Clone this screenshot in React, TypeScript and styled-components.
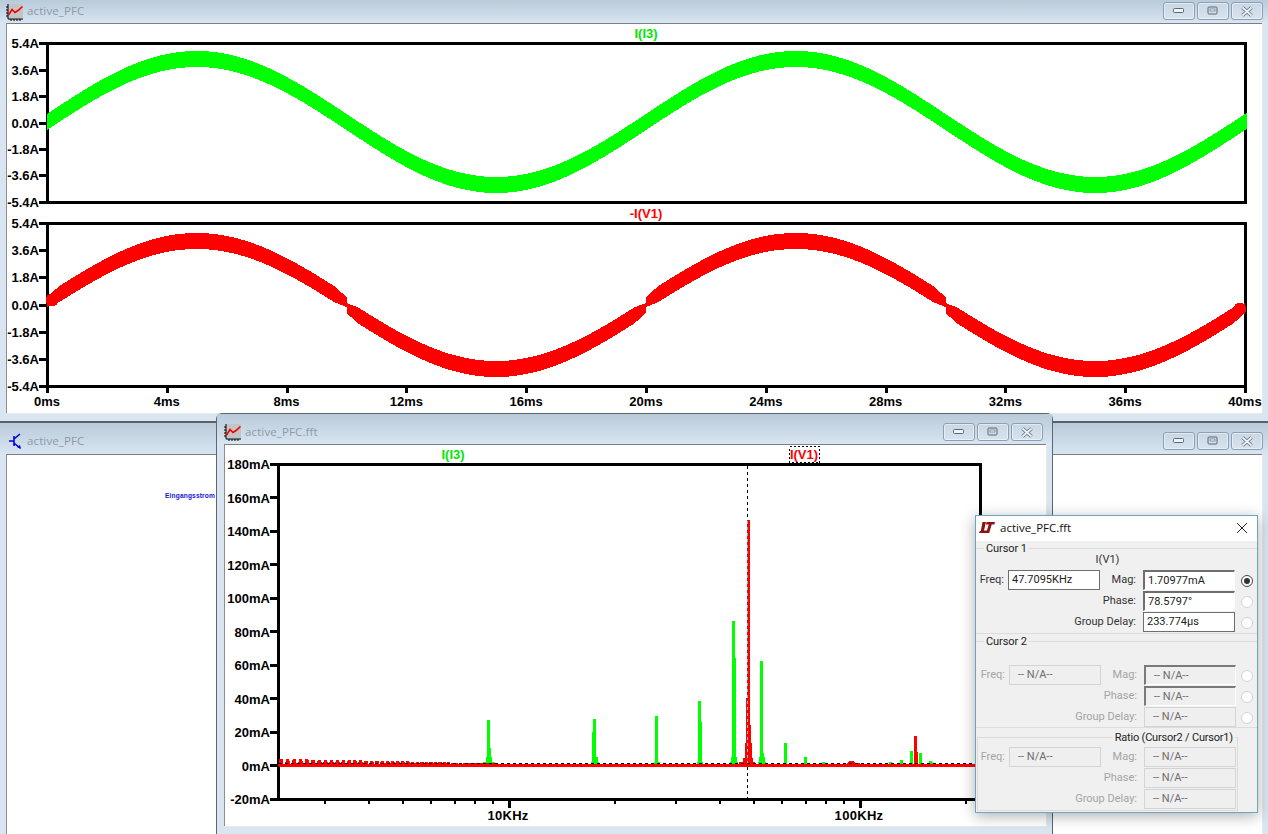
import React from "react";
import styled, { createGlobalStyle } from "styled-components";

const GlobalStyle = createGlobalStyle`
  html, body { margin: 0; padding: 0; background: #d9e6f2; }
  body { width: 1268px; height: 834px; overflow: hidden; font-family: "Open Sans", "Liberation Sans", sans-serif; }
`;

const Desktop = styled.div`
  position: relative; width: 1268px; height: 834px; overflow: hidden; background: #d9e6f2;
`;

const Win = styled.section<{ $x: number; $y: number; $w: number; $h: number; $round?: boolean }>`
  position: absolute; left: ${p => p.$x}px; top: ${p => p.$y}px; width: ${p => p.$w}px; height: ${p => p.$h}px;
  box-sizing: border-box; display: flex; flex-direction: column;
  background: #d9e6f2;
  ${p => p.$round
    ? "border: 1px solid #5f666e; border-bottom: 0; border-radius: 6px 6px 0 0; padding: 0 6px 8px 7px;"
    : "padding: 0 6px 8px;"}
`;

const TitleBar = styled.header<{ $h: number; $left: number; $right: number; $padR: number; $edge?: boolean }>`
  flex: none; height: ${p => p.$h}px; box-sizing: border-box;
  margin: 0 -${p => p.$right}px 0 -${p => p.$left}px; padding: 0 ${p => p.$padR}px 0 ${p => p.$left}px;
  display: flex; align-items: flex-start; gap: 3px;
  background: linear-gradient(#b9cad9, #d8e5f2);
  ${p => p.$edge && "border-top: 2px solid #5b6067;"}
`;

const TitleIcon = styled.svg<{ $top: number }>`
  flex: none; width: 18px; height: 18px; margin-top: ${p => p.$top}px;
`;

const TitleText = styled.span<{ $top: number }>`
  font-size: 11.5px; line-height: 16px; letter-spacing: .12px; color: #8e99a4; margin-top: ${p => p.$top}px;
`;

const Spacer = styled.div`
  flex: 1;
`;

const CtlGroup = styled.div<{ $top: number }>`
  display: flex; gap: 2px; margin-top: ${p => p.$top}px;
`;

const CtlButton = styled.div`
  width: 32px; height: 18px; box-sizing: border-box; display: flex; align-items: center; justify-content: center;
  border: 1px solid #8c9fb3; border-radius: 3px;
  background: linear-gradient(#c9d7e5, #d7e3ef);
  box-shadow: inset 0 0 0 1px rgba(255,255,255,.45);
`;

const Client = styled.div`
  flex: 1; min-height: 0; position: relative; overflow: hidden; background: #fff;
  border-top: 1px solid #7c7f83; border-left: 1px solid #8b8e92;
  box-shadow: 0 1px 0 #e9e9e9, 1px 0 0 #e9e9e9;
`;

const Drawing = styled.svg`
  display: block; position: absolute; left: 0; top: 0; shape-rendering: crispEdges;
`;

const NetLabel = styled.span`
  position: absolute; left: 158px; top: 37px;
  font: bold 6.6px "Liberation Sans", sans-serif; color: #1414d8; letter-spacing: .15px; white-space: nowrap;
`;

const Dialog = styled.aside`
  position: absolute; left: 975px; top: 515px; width: 283px; height: 298px; box-sizing: border-box;
  border: 1px solid #6aa6bf; background: #f0f0f0; display: flex; flex-direction: column;
  box-shadow: 0 3px 14px rgba(0,0,0,.32);
  font: 11px Roboto, "Liberation Sans", sans-serif; color: #1a1a1a;
`;

const DialogTitle = styled.header`
  flex: none; height: 25px; box-sizing: border-box; padding: 0 8px 2px 3px; background: #fff; display: flex; align-items: center; gap: 5px;
  font: 11.5px "Open Sans", sans-serif; color: #111;
`;

const CloseGlyph = styled.svg`
  width: 12px; height: 12px; margin-right: 1px;
`;

const Group = styled.div<{ $h: number; $rule?: boolean }>`
  flex: none; height: ${p => p.$h}px; box-sizing: border-box; position: relative; display: flex; flex-direction: column;
  ${p => p.$rule && "border-bottom: 1px solid #dcdcdc;"}
`;

const GroupHead = styled.div`
  flex: none; height: 14px; margin-top: 1px; display: flex; align-items: center; padding-left: 8px; color: #222;
  &::before { content: ""; position: absolute; left: 0; right: 0; top: 7px; height: 1px; background: #dcdcdc; }
`;

const GroupName = styled.span<{ $tight?: boolean }>`
  position: relative; background: #f0f0f0; padding: 0 2px; line-height: 14px;
  letter-spacing: ${p => (p.$tight ? "-.2px" : "-.1px")};
`;

const Trace = styled.div`
  height: 14px; margin-top: -3px; margin-bottom: 3px; text-align: center; line-height: 14px; color: #333; padding-right: 18px;
`;

const Gap = styled.div<{ $h: number }>`
  flex: none; height: ${p => p.$h}px;
`;

const RatioBox = styled.div`
  position: absolute; left: 1px; top: 9px; width: 261px; bottom: 1px; box-sizing: border-box; border: 1px solid #dcdcdc;
`;

const RatioHead = styled.div`
  flex: none; height: 14px; margin-top: 3px; position: relative; display: flex; justify-content: flex-end; padding-right: 22px; color: #222;
`;

const Row = styled.div<{ $shift?: boolean }>`
  flex: none; height: 21px; position: relative;
  display: grid; grid-template-columns: ${p => (p.$shift ? "33px 92px 43px 92px 21px" : "32px 92px 43px 92px 23px")}; align-items: start;
`;

const Lbl = styled.label<{ $off?: boolean; $wide?: boolean; $at?: number }>`
  grid-column: ${p => (p.$wide ? "1 / 4" : p.$at ?? 1)};
  text-align: right; padding-right: ${p => (p.$at === 3 || p.$wide ? 7 : 4)}px; line-height: 20px;
  white-space: nowrap; color: ${p => (p.$off ? "#a4a4a4" : "#333")};
`;

const Field = styled.div<{ $kind: "plain" | "sunken" | "off" | "offSunken"; $at: number }>`
  grid-column: ${p => p.$at}; height: 20px; box-sizing: border-box; line-height: 18px; padding-left: ${p => (p.$kind === "plain" || p.$kind === "sunken" ? 3 : 8)}px;
  color: ${p => (p.$kind === "plain" || p.$kind === "sunken" ? "#222" : "#6d6d6d")};
  background: ${p => (p.$kind === "plain" || p.$kind === "sunken" ? "#fff" : "#efefef")};
  ${p => p.$kind === "plain" && "border: 1px solid #6e6e6e;"}
  ${p => p.$kind === "sunken" && "border: 1px solid #fff; border-top: 2px solid #6e6e6e; border-left: 2px solid #6e6e6e;"}
  ${p => p.$kind === "off" && "border: 1px solid #d4d4d4;"}
  ${p => p.$kind === "offSunken" && "border: 1px solid #fff; border-top: 2px solid #7a7a7a; border-left: 2px solid #7a7a7a;"}
`;

const Radio = styled.span<{ $on?: boolean }>`
  grid-column: 5; justify-self: center; align-self: center; width: 12px; height: 12px; border-radius: 50%; box-sizing: border-box;
  border: 1px solid ${p => (p.$on ? "#444" : "#d2d2d2")}; background: #fff; position: relative;
  ${p => p.$on && "&::after { content: ''; position: absolute; inset: 2px; border-radius: 50%; background: #333; }"}
`;

const Axis = "#000";
const plotFont = { fontFamily: '"Liberation Sans", sans-serif', fontWeight: 700, fontSize: 13, shapeRendering: "auto" } as const;

// band with a fixed vertical thickness, the ripple of the current makes it that wide
function band(x0: number, x1: number, yAt: (x: number) => number, half: (x: number) => number) {
  const top: string[] = [];
  const bot: string[] = [];
  for (let x = x0; x <= x1; x += 1) {
    top.push(`${x},${(yAt(x) - half(x)).toFixed(1)}`);
    bot.unshift(`${x},${(yAt(x) + half(x)).toFixed(1)}`);
  }
  return [...top, ...bot].join(" ");
}

const PX_MS = 29.95;
const T0 = 47;

const yTicksTop = [["5.4A", 43], ["3.6A", 70], ["1.8A", 96], ["0.0A", 123], ["-1.8A", 149], ["-3.6A", 175], ["-5.4A", 202]] as const;
const yTicksBot = [["5.4A", 223], ["3.6A", 250], ["1.8A", 277], ["0.0A", 305], ["-1.8A", 332], ["-3.6A", 359], ["-5.4A", 386]] as const;
const msTicks = Array.from({ length: 11 }, (_, i) => i * 4);

function TimePlots() {
  const green = band(T0, 1247, x => 122 - 63 * Math.sin(((x - T0) / (PX_MS * 20)) * 2 * Math.PI), () => 8);
  const halves = [0, 1, 2, 3].map(i => {
    const a = T0 + i * 10 * PX_MS;
    const b = T0 + (i + 1) * 10 * PX_MS;
    const up = i % 2 === 0;
    const base = up ? 302 : 308;
    return band(Math.round(a), Math.round(b), x => {
      const s = Math.abs(Math.sin(((x - T0) / (PX_MS * 10)) * Math.PI));
      return up ? base - 61 * s : base + 61 * s;
    }, x => {
      const s = Math.abs(Math.sin(((x - T0) / (PX_MS * 10)) * Math.PI));
      return 5 + 3 * Math.min(1, s * 8);
    });
  });
  return (
    <Drawing width={1255} height={388} viewBox="7 24 1255 388">
      <rect x={47.5} y={43.5} width={1198} height={159} fill="none" stroke={Axis} strokeWidth={3} />
      <polygon points={green} fill="#00ff00" />
      {yTicksTop.map(([t, y]) => (
        <g key={t}>
          <line x1={39} x2={47} y1={y + 0.5} y2={y + 0.5} stroke={Axis} strokeWidth={3} />
          <text x={39} y={y + 5} textAnchor="end" {...plotFont}>{t}</text>
        </g>
      ))}
      <text x={646} y={38} textAnchor="middle" {...plotFont} fill="#00e600">I(I3)</text>

      <rect x={47.5} y={223.5} width={1198} height={163} fill="none" stroke={Axis} strokeWidth={3} />
      {halves.map((p, i) => <polygon key={i} points={p} fill="#ff0000" />)}
      <circle cx={52} cy={300} r={6.5} fill="#ff0000" />
      <circle cx={1240} cy={309} r={6.5} fill="#ff0000" />
      {yTicksBot.map(([t, y]) => (
        <g key={t}>
          <line x1={39} x2={47} y1={y + 0.5} y2={y + 0.5} stroke={Axis} strokeWidth={3} />
          <text x={39} y={y + 5} textAnchor="end" {...plotFont}>{t}</text>
        </g>
      ))}
      <text x={646} y={218} textAnchor="middle" {...plotFont} fill="#ff0000">-I(V1)</text>

      {msTicks.map(m => {
        const x = T0 + m * PX_MS;
        return (
          <g key={m}>
            <line x1={x + 0.5} x2={x + 0.5} y1={386} y2={393} stroke={Axis} strokeWidth={3} />
            <text x={x} y={406} textAnchor="middle" {...plotFont}>{m}ms</text>
          </g>
        );
      })}
    </Drawing>
  );
}

const DEC = 351;
const X10K = 509;
const fx = (khz: number) => X10K + DEC * Math.log10(khz / 10);
const minorK = [3, 4, 5, 6, 7, 8, 9, 20, 30, 40, 50, 60, 70, 80, 90, 200];
const mA = Array.from({ length: 11 }, (_, i) => 180 - i * 20);
const yOf = (v: number) => 765.5 - v * 1.675;

// [x, top, half-width of the foot, y where a second sample widens the spike (0: none), side of it]
const greenSpikes: [number, number, number, number, number][] = [
  [487, 720, 6, 748, 1], [593, 719, 4, 732, -1], [655, 716, 3, 0, 0], [698, 701, 3, 722, 1], [732, 621, 4, 658, 1], [760, 661, 4, 753, 1],
  [784, 743, 1, 0, 0], [804, 757, 1, 0, 0], [822, 762, 1, 0, 0], [889, 762, 1, 0, 0], [900, 760, 1, 0, 0], [910, 751, 1, 0, 0], [919, 753, 1, 0, 0], [929, 761, 2, 0, 0],
];

function Spike({ x, top, foot, wide, side, color }: { x: number; top: number; foot: number; wide: number; side: number; color: string }) {
  return (
    <g fill={color}>
      <rect x={x} y={top} width={3} height={766 - top} />
      {wide > 0 && <rect x={side > 0 ? x + 3 : x - 1} y={wide} width={1} height={766 - wide} />}
      <rect x={x + 1.5 - foot} y={762} width={foot * 2} height={3} />
      {foot > 3 && <rect x={x - 1} y={757} width={6} height={6} />}
    </g>
  );
}

// the stepped outline of the fundamental, samples get wider to the foot
const mainPeak: [number, number, number][] = [
  [747, 750, 520], [746, 750, 698], [746, 751, 725], [745, 752, 743], [743, 753, 758], [739, 755, 762],
];

function FftPlot() {
  const comb: React.ReactElement[] = [];
  for (let i = 0, x = 281; x < 500; i += 1) {
    const h = Math.max(3, 7 - i * 0.11);
    comb.push(<polygon key={x} points={`${x - 3},766 ${x - 1.5},${766 - h} ${x + 1.5},${766 - h} ${x + 3},766`} fill="#ff0000" />);
    x += Math.max(3.5, 6.6 - i * 0.08);
  }
  return (
    <Drawing width={821} height={381} viewBox="225 445 821 381">
      <text x={453} y={459} textAnchor="middle" {...plotFont} fill="#00e600">I(I3)</text>
      <text x={804} y={459} textAnchor="middle" {...plotFont} fill="#ff0000">I(V1)</text>
      <rect x={789.5} y={446.5} width={30} height={16} fill="none" stroke="#000" strokeDasharray="2 2" />
      <rect x={278} y={464.5} width={702.5} height={335} fill="none" stroke={Axis} strokeWidth={3} />
      {mA.map(v => (
        <g key={v}>
          <line x1={270} x2={278} y1={yOf(v)} y2={yOf(v)} stroke={Axis} strokeWidth={3} />
          <text x={270} y={yOf(v) + 5} textAnchor="end" {...plotFont}>{v}mA</text>
        </g>
      ))}
      {minorK.map(k => <line key={k} x1={fx(k)} x2={fx(k)} y1={799} y2={804} stroke={Axis} strokeWidth={2} />)}
      {[10, 100].map(k => (
        <g key={k}>
          <line x1={fx(k)} x2={fx(k)} y1={799} y2={808} stroke={Axis} strokeWidth={3} />
          <text x={fx(k) - 1} y={820} textAnchor="middle" {...plotFont} letterSpacing={0.3}>{k}KHz</text>
        </g>
      ))}
      {greenSpikes.map(([x, top, foot, wide, side]) => <Spike key={x} x={x} top={top} foot={foot} wide={wide} side={side} color="#00ff00" />)}
      {comb}
      {mainPeak.map(([a, b, top]) => <rect key={top} x={a} y={top} width={b - a} height={766 - top} fill="#ff0000" />)}
      <Spike x={914} top={736} foot={2} wide={752} side={1} color="#ff0000" />
      <polygon points="845,765 850,761 853,761 855,763 860,763 861,765" fill="#ff0000" />
      <line x1={279} x2={980} y1={765.5} y2={765.5} stroke="#ff0000" strokeWidth={3} />
      <line x1={279} x2={980} y1={763.5} y2={763.5} stroke="#000" strokeDasharray="3 3" />
      <line x1={747.5} x2={747.5} y1={466} y2={520} stroke="#000" strokeDasharray="3 3" />
      <line x1={747.5} x2={747.5} y1={767} y2={798} stroke="#000" strokeDasharray="3 3" />
      <line x1={747.5} x2={747.5} y1={521} y2={763} stroke="#39d9d9" strokeDasharray="3 3" />
    </Drawing>
  );
}

function Controls({ top }: { top: number }) {
  return (
    <CtlGroup $top={top}>
      <CtlButton>
        <svg width="12" height="6" viewBox="0 0 12 6"><rect x=".5" y=".5" width="10" height="4" rx="1" fill="#eef3f8" stroke="#5c6670" /></svg>
      </CtlButton>
      <CtlButton>
        <svg width="12" height="10" viewBox="0 0 12 10"><rect x="1" y="1" width="9" height="7" rx="1" fill="none" stroke="#5c6670" strokeWidth="1" /><rect x="3" y="3" width="5" height="2" fill="#eef3f8" stroke="#5c6670" strokeWidth=".6" /></svg>
      </CtlButton>
      <CtlButton>
        <svg width="14" height="11" viewBox="0 0 14 11"><path d="M2.5 1.5 11.5 9.5M11.5 1.5 2.5 9.5" stroke="#66717c" strokeWidth="3.6" /><path d="M2.5 1.5 11.5 9.5M11.5 1.5 2.5 9.5" stroke="#edf2f7" strokeWidth="1.8" /></svg>
      </CtlButton>
    </CtlGroup>
  );
}

function WaveIcon({ top }: { top: number }) {
  return (
    <TitleIcon $top={top} viewBox="0 0 18 18">
      <rect x="2" y="1" width="15" height="14" fill="#c4c4c4" />
      <path d="M2 1v15h15" fill="none" stroke="#000" />
      <path d="M0 4h2M0 7h2M0 10h2M0 13h2M5 16v2M8 16v2M11 16v2M14 16v2" stroke="#000" />
      <path d="M2.5 12 6 6.5l3 3 3-2 4.5-4" fill="none" stroke="#f00000" strokeWidth="1.6" />
    </TitleIcon>
  );
}

function SchematicIcon({ top }: { top: number }) {
  return (
    <TitleIcon $top={top} viewBox="0 0 18 18">
      <path d="M3 9h5M8 4v10M8 7l6-5M8 11l6 5" fill="none" stroke="#0000e0" strokeWidth="1.6" />
      <path d="M11 15l4 2-1-4z" fill="#0000e0" />
    </TitleIcon>
  );
}

function LtLogo() {
  return (
    <svg width="16" height="11" viewBox="0 0 16 11">
      <path d="M3.5 0H7L5 8.5H8L7.3 11H0l.8-2h1zM7.5 0H16l-.7 2.4h-2.6L10.2 11H7.2l2.5-8.6H7z" fill="#8f1212" />
    </svg>
  );
}

const NA = "-- N/A--";

function CursorDialog() {
  return (
    <Dialog>
      <DialogTitle>
        <LtLogo />
        active_PFC.fft
        <Spacer />
        <CloseGlyph viewBox="0 0 12 12"><path d="M1 1l10 10M11 1 1 11" stroke="#222" strokeWidth="1" /></CloseGlyph>
      </DialogTitle>
      <Group $h={93} $rule>
        <GroupHead><GroupName>Cursor 1</GroupName></GroupHead>
        <Trace>I(V1)</Trace>
        <Row>
          <Lbl>Freq:</Lbl>
          <Field $at={2} $kind="plain">47.7095KHz</Field>
          <Lbl $at={3}>Mag:</Lbl>
          <Field $at={4} $kind="sunken">1.70977mA</Field>
          <Radio $on />
        </Row>
        <Row>
          <Lbl $wide>Phase:</Lbl>
          <Field $at={4} $kind="sunken">78.5797°</Field>
          <Radio />
        </Row>
        <Row>
          <Lbl $wide>Group Delay:</Lbl>
          <Field $at={4} $kind="plain">233.774µs</Field>
          <Radio />
        </Row>
      </Group>
      <Group $h={94} $rule>
        <GroupHead><GroupName>Cursor 2</GroupName></GroupHead>
        <Gap $h={16} />
        <Row $shift>
          <Lbl $off>Freq:</Lbl>
          <Field $at={2} $kind="off">{NA}</Field>
          <Lbl $off $at={3}>Mag:</Lbl>
          <Field $at={4} $kind="offSunken">{NA}</Field>
          <Radio />
        </Row>
        <Row $shift>
          <Lbl $off $wide>Phase:</Lbl>
          <Field $at={4} $kind="offSunken">{NA}</Field>
          <Radio />
        </Row>
        <Row $shift>
          <Lbl $off $wide>Group Delay:</Lbl>
          <Field $at={4} $kind="off">{NA}</Field>
          <Radio />
        </Row>
      </Group>
      <Group $h={84}>
        <RatioBox />
        <RatioHead><GroupName $tight>Ratio (Cursor2 / Cursor1)</GroupName></RatioHead>
        <Gap $h={2} />
        <Row $shift>
          <Lbl $off>Freq:</Lbl>
          <Field $at={2} $kind="off">{NA}</Field>
          <Lbl $off $at={3}>Mag:</Lbl>
          <Field $at={4} $kind="off">{NA}</Field>
        </Row>
        <Row $shift>
          <Lbl $off $wide>Phase:</Lbl>
          <Field $at={4} $kind="off">{NA}</Field>
        </Row>
        <Row $shift>
          <Lbl $off $wide>Group Delay:</Lbl>
          <Field $at={4} $kind="off">{NA}</Field>
        </Row>
      </Group>
    </Dialog>
  );
}

export default function App() {
  return (
    <Desktop>
      <GlobalStyle />
      <Win $x={0} $y={0} $w={1268} $h={421}>
        <TitleBar $h={23} $left={6} $right={6} $padR={5}>
          <WaveIcon top={3} />
          <TitleText $top={3}>active_PFC</TitleText>
          <Spacer />
          <Controls top={2} />
        </TitleBar>
        <Client><TimePlots /></Client>
      </Win>
      <Win $x={0} $y={421} $w={1268} $h={440}>
        <TitleBar $h={33} $left={6} $right={6} $padR={5} $edge>
          <SchematicIcon top={9} />
          <TitleText $top={10}>active_PFC</TitleText>
          <Spacer />
          <Controls top={9} />
        </TitleBar>
        <Client><NetLabel>Eingangsstrom</NetLabel></Client>
      </Win>
      <Win $x={216} $y={413} $w={837} $h={421} $round>
        <TitleBar $h={30} $left={7} $right={6} $padR={9}>
          <WaveIcon top={9} />
          <TitleText $top={10}>active_PFC.fft</TitleText>
          <Spacer />
          <Controls top={9} />
        </TitleBar>
        <Client><FftPlot /></Client>
      </Win>
      <CursorDialog />
    </Desktop>
  );
}
